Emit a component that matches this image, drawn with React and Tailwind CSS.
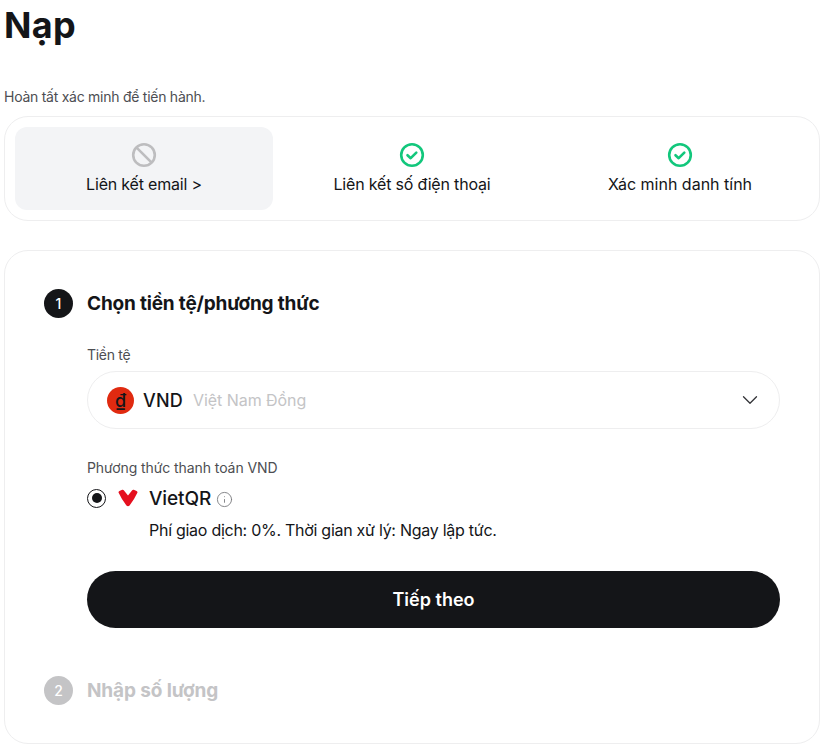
import React from 'react';
import { ChevronDown, Info } from 'lucide-react';

const CheckIcon = () => (
    <svg width="26" height="26" viewBox="0 0 26 26" fill="none">
        <circle cx="13" cy="13" r="10.8" stroke="#12c77c" strokeWidth="2.6" />
        <path d="M8.5 13.2l3.2 3 5.6-5.6" stroke="#12c77c" strokeWidth="2.6" strokeLinecap="round" strokeLinejoin="round" />
    </svg>
);

const BlockedIcon = () => (
    <svg width="26" height="26" viewBox="0 0 26 26" fill="none">
        <circle cx="13" cy="13" r="10.8" stroke="#bdbdbf" strokeWidth="2.6" />
        <path d="M5.6 5.6l14.8 14.8" stroke="#bdbdbf" strokeWidth="2.6" />
    </svg>
);

const VietQrLogo = () => (
    <svg width="20" height="18" viewBox="0 0 20 18" fill="none">
        <path d="M0.5 3.5Q0.3 2.4 1.4 1.9L4.2 0.8Q5.2 0.5 5.8 1.3L10 6.6L14.2 1.3Q14.8 0.5 15.8 0.8L18.6 1.9Q19.7 2.4 19.5 3.5Q16.5 10 11.6 16.6Q10 18 8.4 16.6Q3.5 10 0.5 3.5Z" fill="#e5101f" />
    </svg>
);

const StepBadge = ({ n, muted }) => (
    <div className={`w-[29px] h-[29px] rounded-full flex items-center justify-center text-[14px] font-medium text-white ${muted ? 'bg-[#c4c4c6]' : 'bg-[#141518]'}`}>
        {n}
    </div>
);

const App = () => {
    return (
        <div className="h-[751px] overflow-hidden bg-white px-[4px] pr-[11px] text-[#141518] font-['Inter',sans-serif]">
            <h1 className="h-[50px] text-[36px] leading-[50px] font-bold tracking-[0.3px]">Nạp</h1>
            <p className="mt-[38px] text-[14px] leading-[18px] text-[#4d4e52] tracking-[-0.26px]">Hoàn tất xác minh để tiến hành.</p>

            <div className="mt-[10px] h-[105px] border border-[#eeeeef] rounded-[24px] p-[10px] grid grid-cols-3 gap-[10px]">
                <div className="h-[83px] bg-[#f3f4f6] rounded-[12px] flex flex-col items-center pt-[15px]">
                    <BlockedIcon />
                    <span className="mt-[5px] text-[16px] leading-[22px] tracking-[-0.19px]">Liên kết email &gt;</span>
                </div>
                <div className="h-[83px] flex flex-col items-center pt-[15px]">
                    <CheckIcon />
                    <span className="mt-[5px] text-[16px] leading-[22px] tracking-[-0.18px]">Liên kết số điện thoại</span>
                </div>
                <div className="h-[83px] flex flex-col items-center pt-[15px]">
                    <CheckIcon />
                    <span className="mt-[5px] text-[16px] leading-[22px]">Xác minh danh tính</span>
                </div>
            </div>

            <div className="mt-[29px] h-[494px] border border-[#eeeeef] rounded-[24px] pt-[38px] pl-[39px] pr-[39px]">
                <div className="flex items-center gap-[14px]">
                    <StepBadge n="1" />
                    <h2 className="text-[19px] leading-[29px] font-bold tracking-[-0.18px]">Chọn tiền tệ/phương thức</h2>
                </div>

                <div className="ml-[43px]">
                    <p className="mt-[28px] text-[14px] leading-[18px] text-[#4d4e52] tracking-[-0.3px]">Tiền tệ</p>
                    <div className="mt-[7px] h-[58px] border border-[#eeeeef] rounded-full flex items-center pl-[19px] pr-[16px]">
                        <div className="w-[27px] h-[27px] rounded-full bg-[#e02a10] flex items-center justify-center text-[18px] font-medium">₫</div>
                        <span className="ml-[9px] text-[18px] font-medium tracking-[0.2px]">VND</span>
                        <span className="ml-[10px] text-[16px] text-[#c4c4c6] tracking-[-0.05px]">Việt Nam Đồng</span>
                        <ChevronDown className="ml-auto text-[#333438]" size={26} strokeWidth={1.2} />
                    </div>

                    <p className="mt-[30px] text-[14px] leading-[18px] text-[#4d4e52] tracking-[-0.08px]">Phương thức thanh toán VND</p>
                    <div className="mt-[11px] flex items-center h-[20px]">
                        <div className="w-[19px] h-[19px] rounded-full border-[1.5px] border-[#141518] flex items-center justify-center">
                            <div className="w-[10px] h-[10px] rounded-full bg-[#141518]" />
                        </div>
                        <div className="ml-[12px]"><VietQrLogo /></div>
                        <span className="ml-[11px] mt-[2px] text-[19px] font-medium tracking-[-0.1px]">VietQR</span>
                        <Info className="ml-[5px] mt-[3px] text-[#77787c]" size={17} strokeWidth={1.25} />
                    </div>
                    <p className="mt-[11px] ml-[62px] text-[16px] leading-[22px] tracking-[-0.27px]">Phí giao dịch: 0%. Thời gian xử lý: Ngay lập tức.</p>

                    <button className="mt-[30px] w-full h-[57px] rounded-full bg-[#141518] text-white text-[18px] font-semibold">Tiếp theo</button>
                </div>

                <div className="mt-[48px] flex items-center gap-[14px]">
                    <StepBadge n="2" muted />
                    <h2 className="text-[19px] leading-[29px] font-bold tracking-[-0.12px] text-[#c4c4c6]">Nhập số lượng</h2>
                </div>
            </div>
        </div>
    );
};

export default App;
